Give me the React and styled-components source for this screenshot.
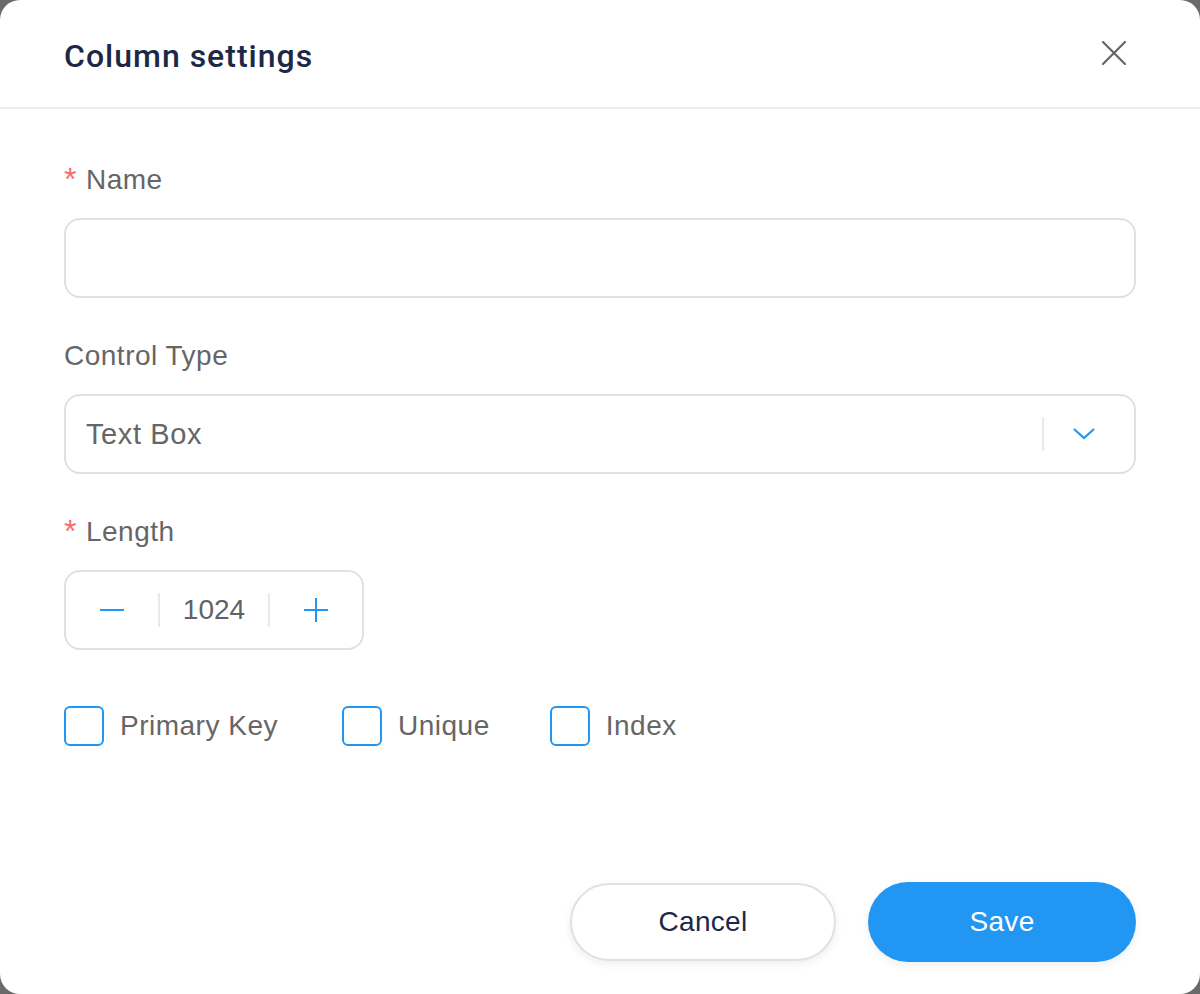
import React, { useState } from "react";
import styled, { createGlobalStyle } from "styled-components";

const GlobalStyle = createGlobalStyle`
  html, body {
    margin: 0;
    padding: 0;
    background: #6a6a6a;
  }
  * { box-sizing: border-box; }
`;

const Dialog = styled.div`
  width: 1200px;
  height: 994px;
  background: #fff;
  border-radius: 20px;
  display: flex;
  flex-direction: column;
  font-family: "Liberation Sans", Arial, sans-serif;
`;

const Header = styled.div`
  height: 109px;
  display: flex;
  align-items: center;
  justify-content: space-between;
  padding: 4px 74px 0 64px;
  border-bottom: 2px solid #e9eef4;
`;

const Title = styled.h2`
  margin: 0;
  font-family: Roboto, "Liberation Sans", sans-serif;
  font-size: 32px;
  font-weight: 500;
  letter-spacing: 1px;
  color: #1b2947;
`;

const CloseButton = styled.button`
  border: none;
  background: none;
  padding: 0;
  width: 24px;
  height: 24px;
  margin-top: -6px;
  display: flex;
  align-items: center;
  justify-content: center;
  cursor: pointer;
`;

const Body = styled.div`
  padding: 51px 64px 0 64px;
  display: flex;
  flex-direction: column;
`;

const Field = styled.div`
  margin-bottom: 38px;
`;

const Label = styled.div`
  font-size: 28px;
  line-height: 40px;
  color: #666;
  margin-bottom: 18px;
  display: flex;
  align-items: center;
  letter-spacing: 0.5px;
`;

const Star = styled.span`
  color: #f56c6c;
  margin-right: 9px;
  font-size: 32px;
  position: relative;
  top: -1px;
`;

const Box = styled.div`
  height: 80px;
  border: 2px solid #dde1e8;
  border-radius: 16px;
  display: flex;
  align-items: center;
  width: ${(p) => (p.$width ? p.$width + "px" : "100%")};
`;

const TextInput = styled.input`
  flex: 1;
  height: 100%;
  border: none;
  outline: none;
  background: transparent;
  padding: 0 20px;
  font: inherit;
  font-size: 28px;
  color: #333;
`;

const SelectValue = styled.div`
  flex: 1;
  padding-left: 20px;
  font-size: 29px;
  letter-spacing: 0.6px;
  color: #666;
`;

const Divider = styled.div`
  width: 2px;
  height: 34px;
  background: #e6eaf0;
`;

const Arrow = styled.div`
  width: 90px;
  display: flex;
  align-items: center;
  justify-content: center;
  padding-right: 10px;
`;

const StepButton = styled.button`
  border: none;
  background: none;
  width: ${(p) => p.$w}px;
  height: 100%;
  display: flex;
  align-items: center;
  justify-content: center;
  cursor: pointer;
  padding: 0;
`;

const StepValue = styled.div`
  width: 108px;
  text-align: center;
  font-size: 28px;
  color: #606266;
`;

const CheckRow = styled.div`
  display: flex;
  align-items: center;
  margin-top: 18px;
`;

const CheckItem = styled.label`
  display: flex;
  align-items: center;
  margin-right: ${(p) => p.$gap}px;
  cursor: pointer;
`;

const CheckBox = styled.span`
  width: 40px;
  height: 40px;
  border: 2px solid #2196f3;
  border-radius: 6px;
  margin-right: 16px;
  background: ${(p) => (p.$on ? "#2196f3" : "#fff")};
`;

const CheckText = styled.span`
  font-size: 28px;
  color: #666;
  letter-spacing: 0.5px;
`;

const Footer = styled.div`
  margin-top: auto;
  display: flex;
  justify-content: flex-end;
  align-items: center;
  gap: 32px;
  padding: 0 64px 32px 0;
`;

const Button = styled.button`
  width: ${(p) => (p.$primary ? 268 : 266)}px;
  height: ${(p) => (p.$primary ? 80 : 78)}px;
  border-radius: 40px;
  font-family: "Liberation Sans", Arial, sans-serif;
  font-size: 28px;
  letter-spacing: 0.3px;
  cursor: pointer;
  border: ${(p) => (p.$primary ? "none" : "2px solid #dde1e8")};
  background: ${(p) => (p.$primary ? "#2196f3" : "#fff")};
  color: ${(p) => (p.$primary ? "#fff" : "#1b2947")};
  box-shadow: 0 3px 8px rgba(0, 0, 0, 0.07);
`;

const App = () => {
  const [name, setName] = useState("");
  const [length, setLength] = useState(1024);
  const [checks, setChecks] = useState({ primary: false, unique: false, index: false });

  const toggle = (key) => setChecks((prev) => ({ ...prev, [key]: !prev[key] }));

  const options = [
    { key: "primary", label: "Primary Key", gap: 64 },
    { key: "unique", label: "Unique", gap: 60 },
    { key: "index", label: "Index", gap: 0 },
  ];

  return (
    <>
      <GlobalStyle />
      <Dialog>
        <Header>
          <Title>Column settings</Title>
          <CloseButton>
            <svg width="24" height="24" viewBox="0 0 24 24">
              <path d="M1 1 L23 23 M23 1 L1 23" stroke="#666" strokeWidth="2.2" strokeLinecap="round" />
            </svg>
          </CloseButton>
        </Header>
        <Body>
          <Field>
            <Label><Star>*</Star>Name</Label>
            <Box>
              <TextInput value={name} onChange={(e) => setName(e.target.value)} />
            </Box>
          </Field>
          <Field>
            <Label>Control Type</Label>
            <Box>
              <SelectValue>Text Box</SelectValue>
              <Divider />
              <Arrow>
                <svg width="24" height="14" viewBox="0 0 24 14">
                  <path d="M2 2 L12 11 L22 2" fill="none" stroke="#2196f3" strokeWidth="2.2" />
                </svg>
              </Arrow>
            </Box>
          </Field>
          <Field>
            <Label><Star>*</Star>Length</Label>
            <Box $width={300}>
              <StepButton $w={92} onClick={() => setLength(length - 1)}>
                <svg width="24" height="4" viewBox="0 0 24 4">
                  <path d="M0 2 H24" stroke="#2196f3" strokeWidth="2" />
                </svg>
              </StepButton>
              <Divider />
              <StepValue>{length}</StepValue>
              <Divider />
              <StepButton $w={92} onClick={() => setLength(length + 1)}>
                <svg width="24" height="24" viewBox="0 0 24 24">
                  <path d="M0 12 H24 M12 0 V24" stroke="#2196f3" strokeWidth="2" />
                </svg>
              </StepButton>
            </Box>
          </Field>
          <CheckRow>
            {options.map((o) => (
              <CheckItem key={o.key} $gap={o.gap} onClick={() => toggle(o.key)}>
                <CheckBox $on={checks[o.key]} />
                <CheckText>{o.label}</CheckText>
              </CheckItem>
            ))}
          </CheckRow>
        </Body>
        <Footer>
          <Button>Cancel</Button>
          <Button $primary>Save</Button>
        </Footer>
      </Dialog>
    </>
  );
};

export default App;
